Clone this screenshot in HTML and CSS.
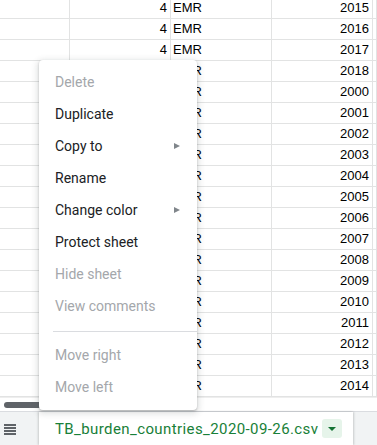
FILE: index.html
```html
<!DOCTYPE html>
<html>
<head>
<meta charset="utf-8">
<link rel="stylesheet" href="styles.css">
</head>
<body>
<div class="page">
  <div class="grid">
    <div class="row"><div class="c"></div><div class="c num">4</div><div class="c txt">EMR</div><div class="c num">2015</div><div class="c"></div></div>
    <div class="row"><div class="c"></div><div class="c num">4</div><div class="c txt">EMR</div><div class="c num">2016</div><div class="c"></div></div>
    <div class="row"><div class="c"></div><div class="c num">4</div><div class="c txt">EMR</div><div class="c num">2017</div><div class="c"></div></div>
    <div class="row"><div class="c"></div><div class="c num">4</div><div class="c txt">EMR</div><div class="c num">2018</div><div class="c"></div></div>
    <div class="row"><div class="c"></div><div class="c num">4</div><div class="c txt">EMR</div><div class="c num">2000</div><div class="c"></div></div>
    <div class="row"><div class="c"></div><div class="c num">4</div><div class="c txt">EMR</div><div class="c num">2001</div><div class="c"></div></div>
    <div class="row"><div class="c"></div><div class="c num">4</div><div class="c txt">EMR</div><div class="c num">2002</div><div class="c"></div></div>
    <div class="row"><div class="c"></div><div class="c num">4</div><div class="c txt">EMR</div><div class="c num">2003</div><div class="c"></div></div>
    <div class="row"><div class="c"></div><div class="c num">4</div><div class="c txt">EMR</div><div class="c num">2004</div><div class="c"></div></div>
    <div class="row"><div class="c"></div><div class="c num">4</div><div class="c txt">EMR</div><div class="c num">2005</div><div class="c"></div></div>
    <div class="row"><div class="c"></div><div class="c num">4</div><div class="c txt">EMR</div><div class="c num">2006</div><div class="c"></div></div>
    <div class="row"><div class="c"></div><div class="c num">4</div><div class="c txt">EMR</div><div class="c num">2007</div><div class="c"></div></div>
    <div class="row"><div class="c"></div><div class="c num">4</div><div class="c txt">EMR</div><div class="c num">2008</div><div class="c"></div></div>
    <div class="row"><div class="c"></div><div class="c num">4</div><div class="c txt">EMR</div><div class="c num">2009</div><div class="c"></div></div>
    <div class="row"><div class="c"></div><div class="c num">4</div><div class="c txt">EMR</div><div class="c num">2010</div><div class="c"></div></div>
    <div class="row"><div class="c"></div><div class="c num">4</div><div class="c txt">EMR</div><div class="c num">2011</div><div class="c"></div></div>
    <div class="row"><div class="c"></div><div class="c num">4</div><div class="c txt">EMR</div><div class="c num">2012</div><div class="c"></div></div>
    <div class="row"><div class="c"></div><div class="c num">4</div><div class="c txt">EMR</div><div class="c num">2013</div><div class="c"></div></div>
    <div class="row"><div class="c"></div><div class="c num">4</div><div class="c txt">EMR</div><div class="c num">2014</div><div class="c"></div></div>
  </div>
  <div class="hscroll"><div class="thumb"></div></div>
  <div class="bottombar">
    <div class="allsheets">
      <svg width="12" height="11" viewBox="0 0 12 11"><rect x="0" y="0" width="12" height="2" fill="#5f6368"/><rect x="0" y="3" width="12" height="2" fill="#5f6368"/><rect x="0" y="6" width="12" height="2" fill="#5f6368"/><rect x="0" y="9" width="12" height="2" fill="#5f6368"/></svg>
    </div>
    <div class="tab">
      <span class="tabname">TB_burden_countries_2020-09-26.csv</span>
      <span class="tabdrop"><svg width="8" height="4" viewBox="0 0 8 4"><path d="M0 0H8L4 4Z" fill="#137333"/></svg></span>
    </div>
    <div class="rest"></div>
  </div>

  <div class="menu">
    <div class="item disabled">Delete</div>
    <div class="item">Duplicate</div>
    <div class="item">Copy to<span class="arrow"></span></div>
    <div class="item">Rename</div>
    <div class="item">Change color<span class="arrow"></span></div>
    <div class="item">Protect sheet</div>
    <div class="item disabled">Hide sheet</div>
    <div class="item disabled">View comments</div>
    <div class="sep"></div>
    <div class="item disabled">Move right</div>
    <div class="item disabled">Move left</div>
  </div>
</div>
</body>
</html>
```

FILE: styles.css
```css
html, body {
  margin: 0;
  padding: 0;
  background: #fff;
}
.page {
  position: relative;
  width: 377px;
  height: 445px;
  overflow: hidden;
  display: flex;
  flex-direction: column;
}
.grid {
  margin-top: -2px;
  display: flex;
  flex-direction: column;
}
.row {
  display: grid;
  grid-template-columns: 70px 101px 101px 101px 1fr;
  height: 21px;
}
.c {
  box-sizing: border-box;
  height: 21px;
  border-right: 1px solid #e2e3e3;
  border-bottom: 1px solid #e2e3e3;
  font-family: "Liberation Sans", Arial, sans-serif;
  font-size: 13px;
  line-height: 20px;
  color: #000;
  white-space: nowrap;
  overflow: hidden;
}
.num {
  text-align: right;
  padding-right: 3px;
}
.txt {
  padding-left: 2px;
}
.hscroll {
  height: 14px;
  box-sizing: border-box;
  border-top: 1px solid #eeeeee;
  padding-top: 4px;
  padding-left: 4px;
}
.thumb {
  width: 150px;
  height: 6px;
  border-radius: 3px;
  background: #5f6368;
}
.bottombar {
  flex: 1;
  display: flex;
  background: #f1f3f4;
  border-top: 1px solid #dadce0;
}
.allsheets {
  width: 37px;
  display: flex;
  align-items: center;
  padding-left: 4px;
  box-sizing: border-box;
  padding-top: 1px;
}
.tab {
  width: 314px;
  background: #fff;
  display: flex;
  align-items: center;
  box-shadow: -1px 0 2px rgba(60,64,67,0.2), 1px 0 2px rgba(60,64,67,0.2);
  margin-left: 2px;
  box-sizing: border-box;
  padding-left: 16px;
}
.tabname {
  font-family: Roboto, "Noto Sans", sans-serif;
  font-weight: 400;
  font-size: 15px;
  color: #188038;
  letter-spacing: 0.4px;
  white-space: nowrap;
}
.tabdrop {
  margin-left: 4px;
  width: 20px;
  height: 19px;
  border-radius: 3px;
  background: #e6f4ea;
  display: flex;
  align-items: center;
  justify-content: center;
}
.rest {
  flex: 1;
}
.menu {
  position: absolute;
  left: 39px;
  top: 60px;
  width: 158px;
  box-sizing: border-box;
  padding: 6px 0 7px;
  background: #fff;
  border-radius: 4px;
  box-shadow: 0 2px 6px 2px rgba(60,64,67,0.15), 0 1px 2px rgba(60,64,67,0.3);
  font-family: Roboto, "Noto Sans", sans-serif;
  font-size: 14px;
}
.item {
  position: relative;
  height: 32px;
  line-height: 32px;
  padding-left: 16px;
  color: #202124;
  white-space: nowrap;
}
.item.disabled {
  color: #a4a7ab;
}
.arrow {
  position: absolute;
  left: 135px;
  top: 13px;
  width: 0;
  height: 0;
  border-top: 3px solid transparent;
  border-bottom: 3px solid transparent;
  border-left: 6px solid #80868b;
}
.sep {
  height: 1px;
  background: #dadce0;
  margin: 9px 0 7px 14px;
}
```
